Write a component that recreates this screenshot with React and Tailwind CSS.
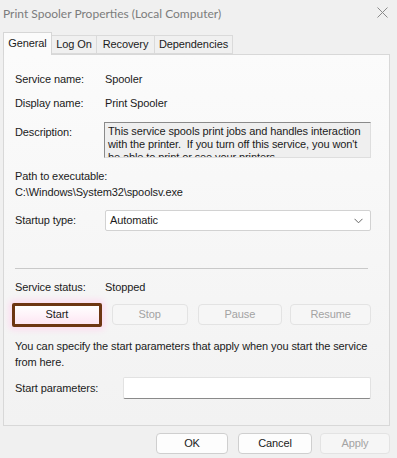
import React from "react";

// Print Spooler properties dialog, General tab

const tabs = [
  { name: "General", w: "w-[49px]" },
  { name: "Log On", w: "w-[45px]" },
  { name: "Recovery", w: "w-[58px]" },
  { name: "Dependencies", w: "w-[78px]" },
];

function Field({ label, children, className = "" }) {
  return (
    <div className={"flex items-center h-[18px] " + className}>
      <div className="w-[90px] shrink-0">{label}</div>
      <div>{children}</div>
    </div>
  );
}

function DimButton({ children, className = "" }) {
  return (
    <div
      className={
        "h-[21px] flex items-center justify-center rounded-[4px] border border-[#e3e3e3] bg-[#f6f6f6] text-[#a3a3a3] " +
        className
      }
    >
      {children}
    </div>
  );
}

export default function App() {
  return (
    <div
      className="w-[397px] h-[458px] bg-[#f0f0f0] text-[11px] tracking-[-0.1px] text-[#1b1b1b] overflow-hidden"
      style={{ fontFamily: '"Liberation Sans", Arial, sans-serif' }}
    >
      {/* title bar */}
      <div className="h-[27px] flex items-center justify-between pl-[3px] pr-[9px]">
        <span className="text-[#7c7c7c] text-[12px] tracking-normal" style={{ fontFamily: "Lato, sans-serif" }}>
          Print Spooler Properties (Local Computer)
        </span>
        <svg width="11" height="11" viewBox="0 0 11 11" className="mt-[-2px]">
          <path d="M0.5 0.5 L10.5 10.5 M10.5 0.5 L0.5 10.5" stroke="#8a8a8a" strokeWidth="1" />
        </svg>
      </div>

      {/* tabs */}
      <div className="flex items-end pl-[3px] h-[27px] relative z-10">
        {tabs.map((t, i) =>
          i === 0 ? (
            <div
              key={t.name}
              className={t.w + " h-[23px] flex items-center justify-center border border-b-0 border-[#d6d6d6] bg-[#fbfbfb] mb-[-1px] pb-[2px]"}
            >
              {t.name}
            </div>
          ) : (
            <div
              key={t.name}
              className={t.w + " h-[19px] flex items-center justify-center border border-l-0 border-[#dadada] bg-[#f0f0f0]"}
            >
              {t.name}
            </div>
          )
        )}
      </div>

      {/* panel */}
      <div className="mx-[3px] w-[387px] h-[372px] border border-[#d8d8d8] bg-gradient-to-b from-[#fbfbfb] to-[#f2f2f2] pl-[11px] pr-[18px]">
        <Field label="Service name:" className="mt-[15px]">Spooler</Field>
        <Field label="Display name:" className="mt-[6px]">Print Spooler</Field>

        <div className="flex mt-[10px]">
          <div className="w-[89px] shrink-0 mt-[2px]">Description:</div>
          <div className="w-[267px] h-[36px] overflow-hidden border border-[#8a8a8a] border-r-[#dedede] border-b-[#dedede] bg-[#efefef] pl-[3px] pt-[2px] leading-[13px]">
            This service spools print jobs and handles interaction with the printer.&nbsp; If you turn off this service, you won't be able to print or see your printers.
          </div>
        </div>

        <div className="mt-[10px] leading-[16px]">Path to executable:</div>
        <div className="leading-[16px]">C:\Windows\System32\spoolsv.exe</div>

        <div className="flex items-center mt-[10px]">
          <div className="w-[90px] shrink-0">Startup type:</div>
          <div className="w-[266px] h-[21px] flex items-center justify-between border border-[#d2d2d2] rounded-[2px] bg-white pl-[4px] pr-[7px]">
            <span>Automatic</span>
            <svg width="9" height="6" viewBox="0 0 9 6">
              <path d="M0.5 0.8 L4.5 4.8 L8.5 0.8" stroke="#666" strokeWidth="1" fill="none" />
            </svg>
          </div>
        </div>

        <div className="mt-[37px] border-t border-[#c9c9c9] w-[353px]" />

        <Field label="Service status:" className="mt-[9px]">Stopped</Field>

        <div className="flex items-center mt-[7px] h-[23px]">
          <div className="ml-[-3px] w-[90px] h-[24px] border-[3px] border-[#6d3612] rounded-[2px] shadow-[0_0_6px_3px_#fcdcf0] bg-white flex items-center justify-center">
            <div className="w-full h-full bg-gradient-to-b from-white to-[#fde6f3] flex items-center justify-center">
              Start
            </div>
          </div>
          <DimButton className="w-[76px] ml-[10px]">Stop</DimButton>
          <DimButton className="w-[85px] ml-[10px]">Pause</DimButton>
          <DimButton className="w-[81px] ml-[8px]">Resume</DimButton>
        </div>

        <div className="mt-[12px] leading-[16px] whitespace-nowrap">
          You can specify the start parameters that apply when you start the service
          <br />
          from here.
        </div>

        <div className="flex items-center mt-[7px]">
          <div className="w-[108px] shrink-0">Start parameters:</div>
          <div className="w-[248px] h-[22px] bg-white border border-[#e2e2e2] border-b-[#8a8a8a] rounded-[2px]" />
        </div>
      </div>

      {/* footer buttons */}
      <div className="flex justify-end pr-[7px] mt-[7px]">
        <div className="w-[72px] h-[21px] flex items-center justify-center border border-[#cfcfcf] rounded-[4px] bg-[#fdfdfd]">
          OK
        </div>
        <div className="w-[74px] h-[21px] ml-[10px] flex items-center justify-center border border-[#cfcfcf] rounded-[4px] bg-[#fdfdfd]">
          Cancel
        </div>
        <DimButton className="w-[70px] ml-[8px]">Apply</DimButton>
      </div>
    </div>
  );
}
